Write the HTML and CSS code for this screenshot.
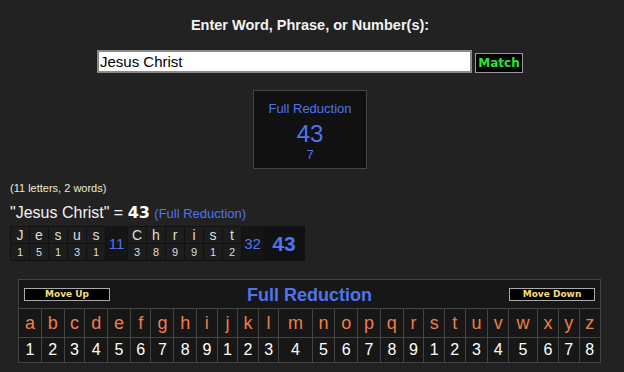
FILE: index.html
```html
<html lang="en">
<head>
    <meta charset="UTF-8">
    <meta name="viewport" content="width=device-width, initial-scale=1.0">
    <title>Gematria Calculator</title>
    <link rel="stylesheet" href="styles.css">
</head>
<body>

<div class="page">
    <h1 class="title">Enter Word, Phrase, or Number(s):</h1>
    <form class="entry">
        <input class="phrase" type="text" name="phrase" value="Jesus Christ">
        <button class="match" type="button">Match</button>
    </form>

    <div class="cipher-box">
        <div class="cipher-name">Full Reduction</div>
        <div class="cipher-sum">43</div>
        <div class="cipher-root">7</div>
    </div>

    <p class="count">(11 letters, 2 words)</p>
    <p class="equation">"Jesus Christ" = <b>43</b> <span>(Full Reduction)</span></p>

    <table class="breakdown">
        <tr>
            <td>J</td><td>e</td><td>s</td><td>u</td><td>s</td>
            <td class="word-sum" rowspan="2">11</td>
            <td>C</td><td>h</td><td>r</td><td>i</td><td>s</td><td>t</td>
            <td class="word-sum" rowspan="2">32</td>
            <td class="total" rowspan="2">43</td>
        </tr>
        <tr class="nums">
            <td>1</td><td>5</td><td>1</td><td>3</td><td>1</td>
            <td>3</td><td>8</td><td>9</td><td>9</td><td>1</td><td>2</td>
        </tr>
    </table>

    <table class="chart">
        <tr>
            <td class="chart-head" colspan="26">
                <div class="head-row">
                    <button class="move" type="button">Move Up</button>
                    <span class="chart-title">Full Reduction</span>
                    <button class="move" type="button">Move Down</button>
                </div>
            </td>
        </tr>
        <tr class="letters">
            <td>a</td><td>b</td><td>c</td><td>d</td><td>e</td><td>f</td><td>g</td><td>h</td><td>i</td>
            <td>j</td><td>k</td><td>l</td><td>m</td><td>n</td><td>o</td><td>p</td><td>q</td><td>r</td>
            <td>s</td><td>t</td><td>u</td><td>v</td><td>w</td><td>x</td><td>y</td><td>z</td>
        </tr>
        <tr class="values">
            <td>1</td><td>2</td><td>3</td><td>4</td><td>5</td><td>6</td><td>7</td><td>8</td><td>9</td>
            <td>1</td><td>2</td><td>3</td><td>4</td><td>5</td><td>6</td><td>7</td><td>8</td><td>9</td>
            <td>1</td><td>2</td><td>3</td><td>4</td><td>5</td><td>6</td><td>7</td><td>8</td>
        </tr>
    </table>
</div>

</body>
</html>
```

FILE: styles.css
```css
body {
    margin: 0;
    background-color: #222;
    color: #eee;
    font-family: "Liberation Sans", Arial, sans-serif;
}
.page {
    width: 620px;
}
.title {
    margin: 0;
    padding-top: 17px;
    font-size: 14.5px;
    line-height: 16px;
    text-align: center;
    color: #f2f2f2;
}
.entry {
    display: flex;
    justify-content: center;
    align-items: flex-end;
    gap: 3px;
    margin: 17px 0 0;
}
.phrase {
    width: 375px;
    height: 23px;
    box-sizing: border-box;
    border: 2px solid #8a8a8a;
    padding: 0 1px;
    font-family: "Liberation Sans", Arial, sans-serif;
    font-size: 15px;
    color: #000;
    background-color: #fff;
}
.match {
    width: 48px;
    height: 20px;
    box-sizing: border-box;
    padding: 0;
    border: 1px solid #9a9a9a;
    background-color: #000;
    color: #2ee62e;
    font-family: "DejaVu Sans", Verdana, sans-serif;
    font-weight: bold;
    font-size: 12px;
}
.cipher-box {
    width: 114px;
    margin: 17px auto 0;
    box-sizing: border-box;
    padding: 10px 0 6px;
    border: 1px solid #454545;
    background-color: #111;
    text-align: center;
    color: #4f74ee;
}
.cipher-name {
    font-size: 13px;
    line-height: 15px;
}
.cipher-sum {
    margin-top: 6px;
    font-size: 24px;
    line-height: 24px;
}
.cipher-root {
    margin-top: 1px;
    font-size: 13px;
    line-height: 15px;
}
.count {
    margin: 13px 0 0 10px;
    font-size: 11px;
    line-height: 13px;
    color: #ecebd8;
}
.equation {
    margin: 9px 0 0 10px;
    font-size: 16px;
    line-height: 18px;
    color: #f2f2f2;
}
.equation b {
    font-family: "DejaVu Sans", Verdana, sans-serif;
    font-size: 16px;
    color: #fff;
}
.equation span {
    font-size: 13px;
    color: #4f74ee;
}
.breakdown {
    margin: 3px 0 0 10px;
    border-spacing: 1px;
    background-color: #111;
}
.breakdown td {
    width: 18px;
    height: 16px;
    padding: 0;
    background-color: #1d1d1d;
    text-align: center;
    font-size: 14px;
    line-height: 16px;
    color: #ddd;
}
.breakdown .nums td {
    font-size: 11px;
}
.breakdown td.word-sum {
    width: 21px;
    background-color: #151515;
    color: #4f74ee;
    font-size: 15px;
}
.breakdown td.total {
    width: 40px;
    background-color: #111;
    color: #4f74ee;
    font-size: 21px;
    font-weight: bold;
}
.chart {
    width: 583px;
    margin: 18px 0 0 18px;
    border-collapse: collapse;
    background-color: #171717;
    border: 1px solid #444;
}
.chart td {
    border: 1px solid #444;
    padding: 0;
    text-align: center;
}
.chart td.chart-head {
    height: 29px;
    padding: 0 5px;
}
.head-row {
    display: flex;
    justify-content: space-between;
    align-items: center;
}
.move {
    width: 86px;
    height: 13px;
    box-sizing: border-box;
    padding: 0;
    border: 1px solid #aaa;
    background-color: #000;
    color: #f6df7c;
    font-family: "DejaVu Sans", Verdana, sans-serif;
    font-weight: bold;
    font-size: 9px;
    line-height: 11px;
}
.chart-title {
    margin-top: 2px;
    color: #4f74ee;
    font-weight: bold;
    font-size: 18px;
}
.letters td {
    height: 29px;
    color: #ee7f48;
    font-size: 18px;
}
.values td {
    height: 25px;
    color: #fff;
    font-size: 16px;
}
```
